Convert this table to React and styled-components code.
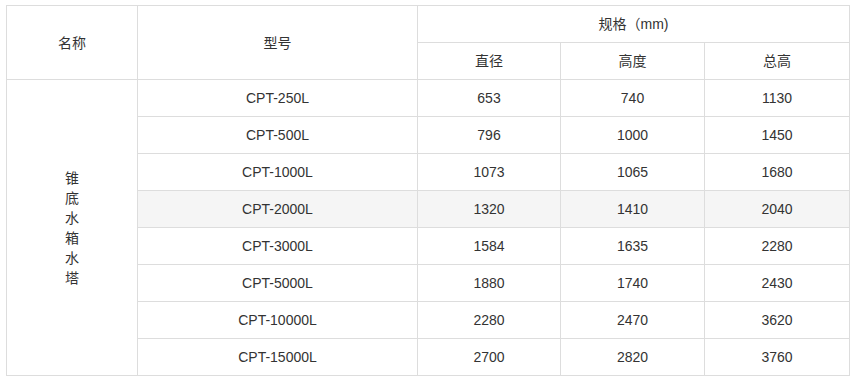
import React from "react";
import styled, { createGlobalStyle } from "styled-components";

const Global = createGlobalStyle`
  html, body { margin: 0; padding: 0; background: #fff; }
  body { font-family: "Liberation Sans", Arial, "Noto Sans CJK SC", sans-serif; }
`;

const Wrap = styled.div`
  padding: 5px 0 0 6px;
`;

const Table = styled.table`
  border-collapse: collapse;
  table-layout: fixed;
  width: 843px;
  font-size: 14px;
  color: #333;
`;

const Cell = styled.td`
  border: 1px solid #ddd;
  height: 36px;
  padding: 0;
  text-align: center;
  vertical-align: middle;
  line-height: 20px;
  background: ${(p) => (p.$hl ? "#f5f5f5" : "transparent")};
`;

const Head = styled(Cell).attrs({ as: "th" })`
  font-weight: normal;
`;

const Vertical = styled.div`
  width: 14px;
  margin: 0 auto;
  line-height: 20px;
  word-break: break-all;
`;

const rows = [
  ["CPT-250L", "653", "740", "1130"],
  ["CPT-500L", "796", "1000", "1450"],
  ["CPT-1000L", "1073", "1065", "1680"],
  ["CPT-2000L", "1320", "1410", "2040"],
  ["CPT-3000L", "1584", "1635", "2280"],
  ["CPT-5000L", "1880", "1740", "2430"],
  ["CPT-10000L", "2280", "2470", "3620"],
  ["CPT-15000L", "2700", "2820", "3760"],
];

export default function App() {
  return (
    <Wrap>
      <Global />
      <Table>
        <colgroup>
          <col style={{ width: 131 }} />
          <col style={{ width: 280 }} />
          <col style={{ width: 143 }} />
          <col style={{ width: 144 }} />
          <col style={{ width: 145 }} />
        </colgroup>
        <thead>
          <tr>
            <Head rowSpan={2}>名称</Head>
            <Head rowSpan={2}>型号</Head>
            <Head colSpan={3}>规格（mm)</Head>
          </tr>
          <tr>
            <Head>直径</Head>
            <Head>高度</Head>
            <Head>总高</Head>
          </tr>
        </thead>
        <tbody>
          {rows.map((r, i) => (
            <tr key={r[0]}>
              {i === 0 && (
                <Cell rowSpan={rows.length}>
                  <Vertical>锥底水箱水塔</Vertical>
                </Cell>
              )}
              {r.map((v) => (
                <Cell key={v} $hl={i === 3}>
                  {v}
                </Cell>
              ))}
            </tr>
          ))}
        </tbody>
      </Table>
    </Wrap>
  );
}
